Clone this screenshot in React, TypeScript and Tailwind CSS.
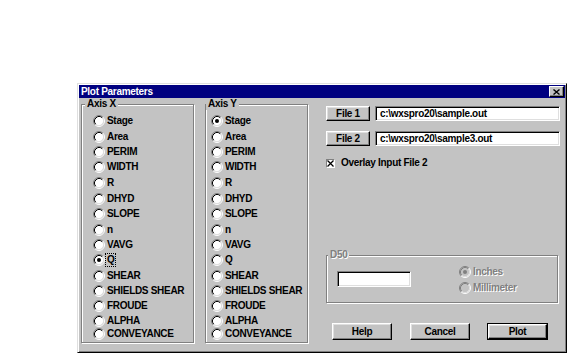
import React from "react";

const FONT = "font-['Liberation_Sans',Arial,sans-serif] text-[10px] font-bold tracking-[-0.3px]";

const items = [
  "Stage",
  "Area",
  "PERIM",
  "WIDTH",
  "R",
  "DHYD",
  "SLOPE",
  "n",
  "VAVG",
  "Q",
  "SHEAR",
  "SHIELDS SHEAR",
  "FROUDE",
  "ALPHA",
  "CONVEYANCE",
];

const gaps = [
  "mt-0",
  "mt-[4px]",
  "mt-[3px]",
  "mt-[3px]",
  "mt-[4px]",
  "mt-[4px]",
  "mt-[3px]",
  "mt-[4px]",
  "mt-[3px]",
  "mt-[3px]",
  "mt-[4px]",
  "mt-[3px]",
  "mt-[3px]",
  "mt-[3px]",
  "mt-[1px]",
];

function Radio({ checked, disabled }: { checked?: boolean; disabled?: boolean }) {
  return (
    <svg width="12" height="12" viewBox="0 0 12 12" className="shrink-0">
      <circle cx="6" cy="6" r="4.5" fill={disabled ? "#c3c3c3" : "#fff"} />
      <path d="M2.11 9.89A5.5 5.5 0 0 1 9.89 2.11" stroke="#808080" fill="none" />
      <path d="M9.89 2.11A5.5 5.5 0 0 1 2.11 9.89" stroke="#fff" fill="none" />
      <path d="M2.82 9.18A4.5 4.5 0 0 1 9.18 2.82" stroke={disabled ? "#808080" : "#000"} fill="none" />
      <path d="M9.18 2.82A4.5 4.5 0 0 1 2.82 9.18" stroke="#dfdfdf" fill="none" />
      {checked && <circle cx="6" cy="6" r="2" fill={disabled ? "#808080" : "#000"} />}
    </svg>
  );
}

function RadioRow({
  label,
  checked,
  focus,
  gap,
}: {
  label: string;
  checked?: boolean;
  focus?: boolean;
  gap: string;
}) {
  return (
    <div className={`flex h-[12px] items-center ${gap}`}>
      <Radio checked={checked} />
      <span
        className={`leading-[12px] text-black ${
          focus ? "ml-[1px] px-[1px] outline-1 outline-dotted outline-black" : "ml-[2px]"
        }`}
      >
        {label}
      </span>
    </div>
  );
}

function Group({
  title,
  selected,
  focusItem,
  widthCls,
  padCls,
  legendCls,
}: {
  title: string;
  selected: string;
  focusItem?: string;
  widthCls: string;
  padCls: string;
  legendCls: string;
}) {
  return (
    <fieldset
      className={`h-[245px] ${widthCls} border border-[#808080] shadow-[inset_1px_1px_0_#fff,1px_1px_0_#fff]`}
    >
      <legend className={`${legendCls} bg-[#c3c3c3] px-[2px] leading-[12px] text-black`}>{title}</legend>
      <div className={`flex flex-col pt-[5px] ${padCls}`}>
        {items.map((it, i) => (
          <RadioRow
            key={it}
            label={it}
            checked={it === selected}
            focus={it === focusItem}
            gap={gaps[i]}
          />
        ))}
      </div>
    </fieldset>
  );
}

function Button({ label, widthCls, heightCls, isDefault }: { label: string; widthCls: string; heightCls: string; isDefault?: boolean }) {
  const inner = (
    <div
      className={`flex h-full w-full items-center justify-center border border-t-white border-l-white border-r-black border-b-black bg-[#c3c3c3] shadow-[inset_-1px_-1px_0_#808080,inset_1px_1px_0_#dfdfdf] text-black`}
    >
      {label}
    </div>
  );
  if (isDefault) {
    return <div className={`${widthCls} ${heightCls} shrink-0 border border-black`}>{inner}</div>;
  }
  return <div className={`${widthCls} ${heightCls} shrink-0`}>{inner}</div>;
}

function Field({ value, widthCls, heightCls }: { value?: string; widthCls: string; heightCls: string }) {
  return (
    <div
      className={`${widthCls} ${heightCls} flex items-center overflow-hidden border border-t-[#808080] border-l-[#808080] border-r-white border-b-white bg-white pl-[4px] shadow-[inset_1px_1px_0_#000,inset_-1px_-1px_0_#dfdfdf] text-black leading-[12px]`}
    >
      {value}
    </div>
  );
}

export default function App() {
  return (
    <div className={`h-[354px] w-[576px] overflow-hidden bg-white pl-[77px] pt-[83px] ${FONT}`}>
      <div className="flex h-[270px] w-[490px] flex-col border border-t-[#dfdfdf] border-l-[#dfdfdf] border-r-black border-b-black bg-[#c3c3c3] p-[1px] shadow-[inset_1px_1px_0_#fff,inset_-1px_-1px_0_#808080]">
        {/* title bar */}
        <div className="flex h-[13px] items-center justify-between bg-[#000080] pl-[2px] pr-[1px]">
          <span className="leading-[13px] text-white">Plot Parameters</span>
          <div className="flex h-[11px] w-[15px] items-center justify-center border border-t-white border-l-white border-r-black border-b-black bg-[#c3c3c3] shadow-[inset_-1px_-1px_0_#808080]">
            <svg width="7" height="6" viewBox="0 0 7 6">
              <path d="M0.5 0.5L6.5 5.5M6.5 0.5L0.5 5.5" stroke="#000" strokeWidth="1.4" />
            </svg>
          </div>
        </div>

        {/* content */}
        <div className="flex pl-[2px]">
          <Group
            title="Axis X"
            selected="Q"
            focusItem="Q"
            widthCls="w-[113px]"
            padCls="pl-[11px]"
            legendCls="ml-[3px]"
          />
          <div className="ml-[11px]">
            <Group
              title="Axis Y"
              selected="Stage"
              widthCls="w-[103px]"
              padCls="pl-[5px]"
              legendCls="ml-0"
            />
          </div>

          <div className="ml-[18px] flex w-[234px] flex-col">
            <div className="mt-[8px] flex h-[15px]">
              <Button label="File 1" widthCls="w-[44px]" heightCls="h-[15px]" />
              <div className="ml-[5px]">
                <Field value="c:\wxspro20\sample.out" widthCls="w-[185px]" heightCls="h-[15px]" />
              </div>
            </div>
            <div className="mt-[10px] flex h-[15px]">
              <Button label="File 2" widthCls="w-[44px]" heightCls="h-[15px]" />
              <div className="ml-[5px]">
                <Field value="c:\wxspro20\sample3.out" widthCls="w-[185px]" heightCls="h-[15px]" />
              </div>
            </div>
            <div className="mt-[12px] flex h-[10px] items-center">
              <div className="flex h-[9px] w-[9px] shrink-0 items-center justify-center border border-t-[#808080] border-l-[#808080] border-r-white border-b-white bg-white">
                <svg width="7" height="7" viewBox="0 0 7 7">
                  <path d="M0.5 0.5L6.5 6.5M6.5 0.5L0.5 6.5" stroke="#000" strokeWidth="1.3" />
                </svg>
              </div>
              <span className="ml-[6px] leading-[10px] text-black">Overlay Input File 2</span>
            </div>

            <fieldset className="mt-[81px] h-[54px] w-[232px] border border-[#808080] shadow-[inset_1px_1px_0_#fff,1px_1px_0_#fff]">
              <legend className="ml-[1px] bg-[#c3c3c3] px-[2px] leading-[12px] text-[#808080] [text-shadow:1px_1px_0_#fff]">
                D50
              </legend>
              <div className="flex pl-[10px]">
                <div className="mt-[10px]">
                  <Field widthCls="w-[74px]" heightCls="h-[16px]" />
                </div>
                <div className="ml-[48px] mt-[5px] flex flex-col">
                  <div className="flex h-[12px] items-center">
                    <Radio checked disabled />
                    <span className="ml-[2px] leading-[12px] text-[#808080] [text-shadow:1px_1px_0_#fff]">Inches</span>
                  </div>
                  <div className="mt-[4px] flex h-[12px] items-center">
                    <Radio disabled />
                    <span className="ml-[2px] leading-[12px] text-[#808080] [text-shadow:1px_1px_0_#fff]">Millimeter</span>
                  </div>
                </div>
              </div>
            </fieldset>

            <div className="mt-[20px] flex h-[17px]">
              <div className="ml-[6px]">
                <Button label="Help" widthCls="w-[60px]" heightCls="h-[17px]" />
              </div>
              <div className="ml-[18px]">
                <Button label="Cancel" widthCls="w-[60px]" heightCls="h-[17px]" />
              </div>
              <div className="ml-[17px]">
                <Button label="Plot" widthCls="w-[61px]" heightCls="h-[17px]" isDefault />
              </div>
            </div>
          </div>
        </div>
      </div>
    </div>
  );
}
